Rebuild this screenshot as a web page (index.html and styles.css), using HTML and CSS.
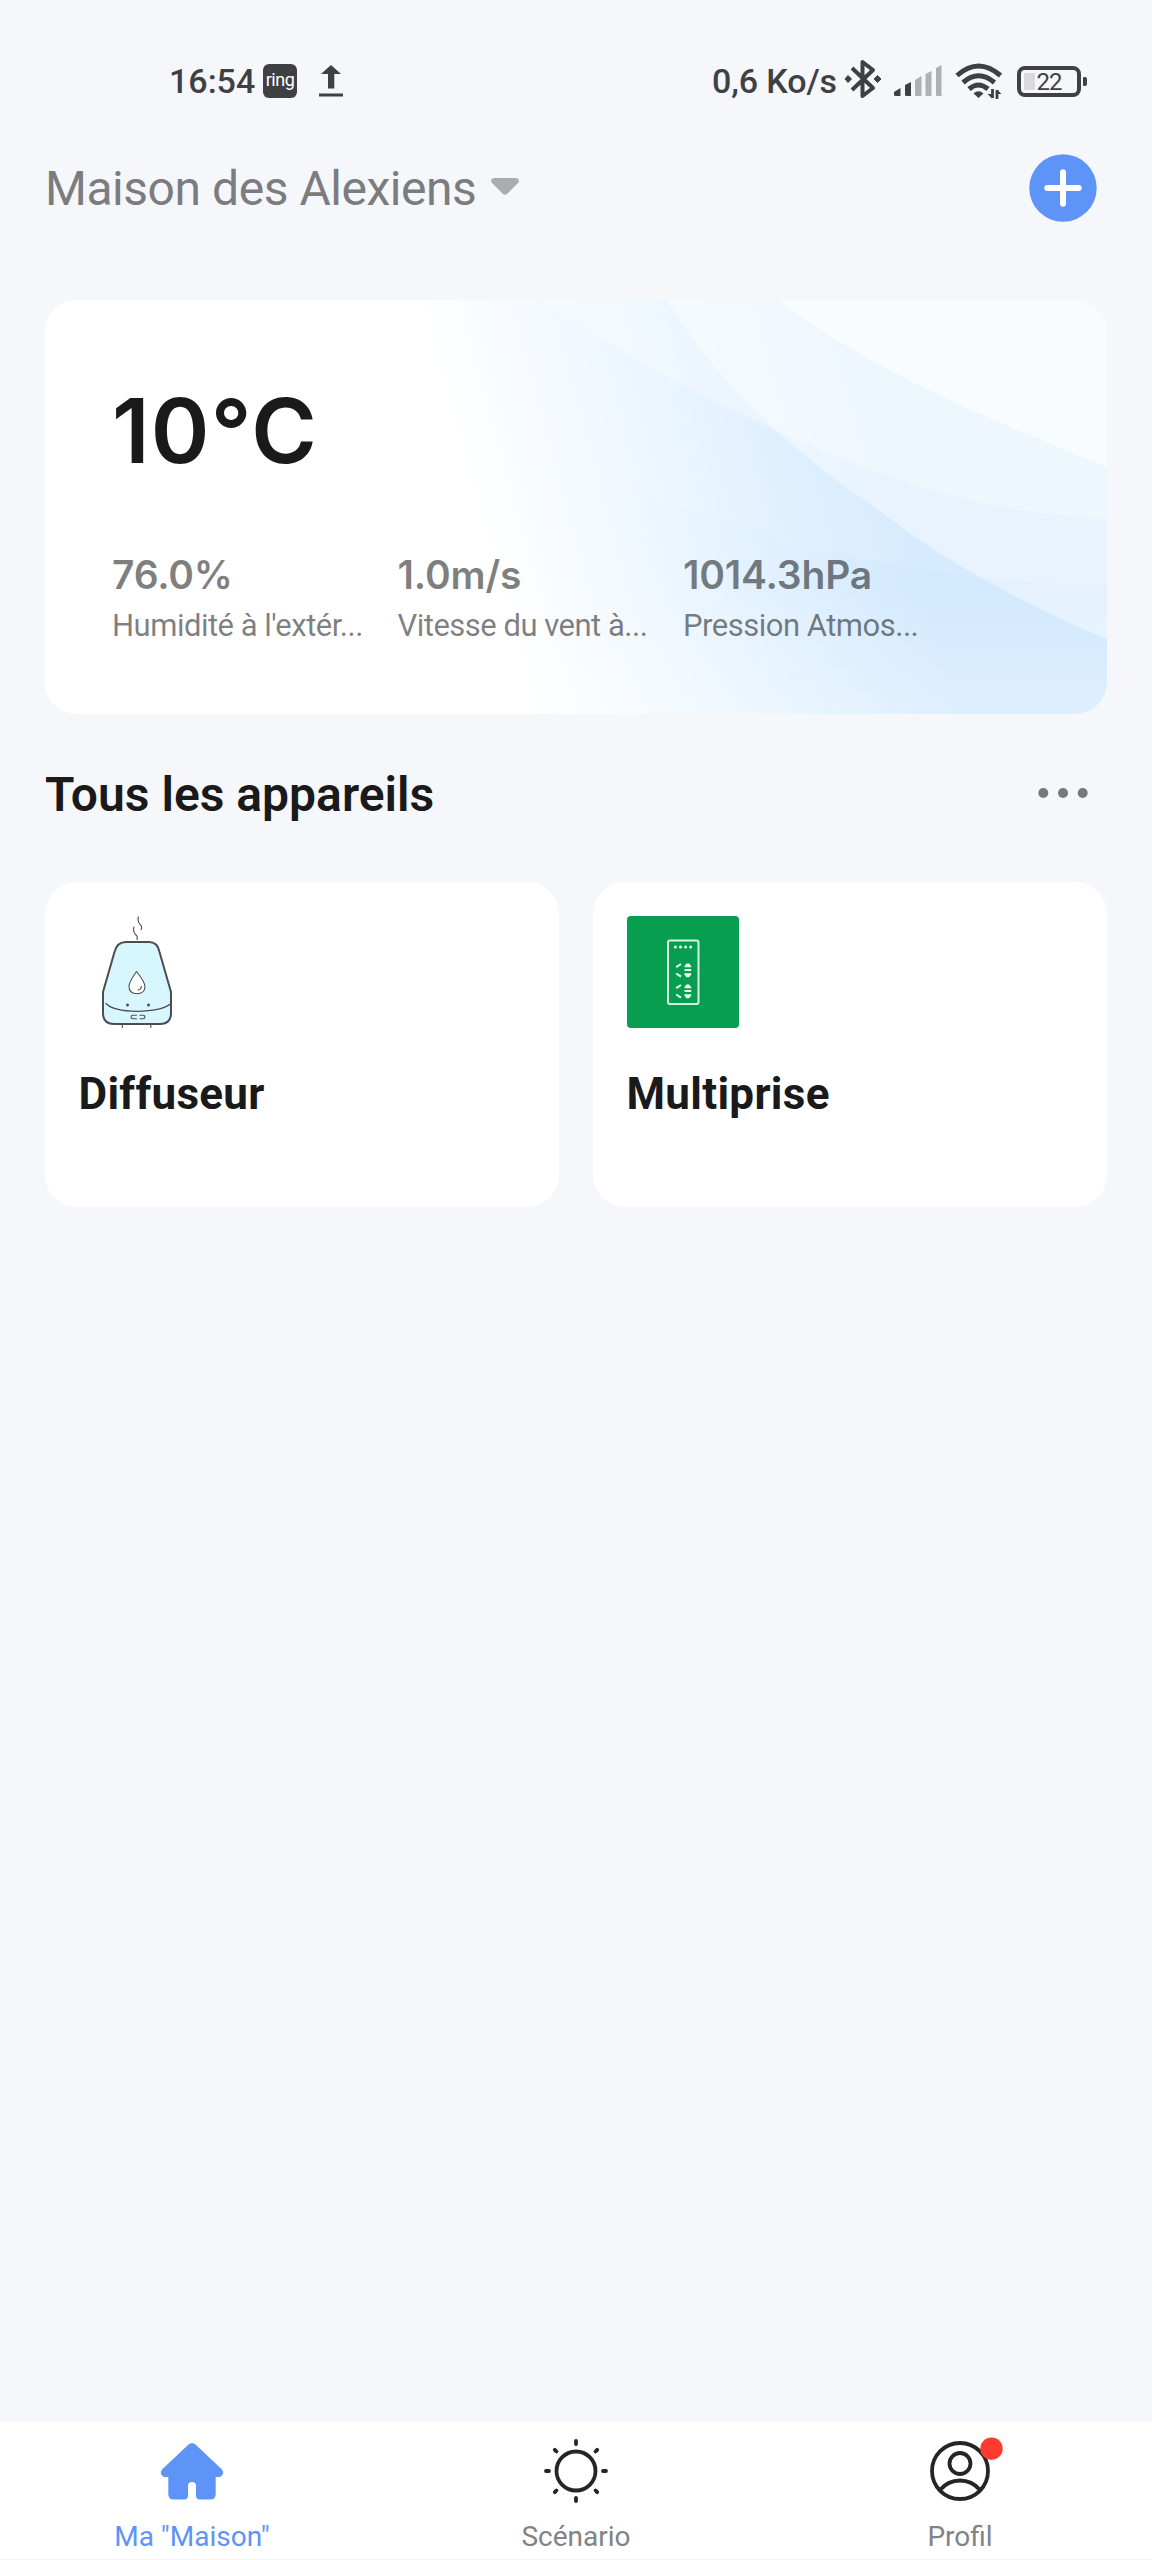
FILE: index.html
```html
<!DOCTYPE html>
<html lang="fr">
<head>
<meta charset="utf-8">
<title>Maison des Alexiens</title>
<link rel="stylesheet" href="styles.css">
</head>
<body>
<header class="status">
  <div class="status-left">
    <span class="clock">16:54</span>
    <span class="ring">ring</span>
    <svg class="upload" width="24" height="34" viewBox="0 0 24 34"><path d="M12 1 22 10H15.300V24.500H9V10H2Z" fill="#3f4044"/><path d="M0 31H24" stroke="#3f4044" stroke-width="3"/></svg>
  </div>
  <div class="status-right">
    <span class="speed">0,6 Ko/s</span>
    <svg class="bt" width="38" height="42" viewBox="0 0 38 42" fill="none" stroke="#3f4044" stroke-width="4" stroke-linejoin="round"><path d="M8 10 29 30 18.500 38V4L29 12 8 32"/><g fill="#3f4044" stroke="none"><path d="M4 17.500 7.500 21 4 24.500 1 21ZM33.500 17.500 37 21 33.500 24.500 30 21Z" stroke="#3f4044" stroke-width="1"/></g></svg>
    <svg class="signal" width="48" height="32" viewBox="0 0 48 32"><g fill="#3f4044"><path d="M0 27 6.500 23V31H1.500Q0 31 0 29.500ZM11 20 17 17V31H12.500Q11 31 11 29.500Z"/></g><g fill="#aeb0b4"><path d="M21 15 27.500 11V31H22.500Q21 31 21 29.500ZM31.500 9 37.500 6V31H33Q31.500 31 31.500 29.500ZM42 3 47.500 0V31H43.500Q42 31 42 29.500Z"/></g></svg>
    <svg class="wifi" width="48" height="36" viewBox="0 0 48 36" fill="none" stroke="#3f4044" stroke-width="5"><path d="M2 12.500Q23.500-6.500 45.500 12.500M8 19.500Q23.500 6 39.500 19.500M14 26Q23.500 18 33 26"/><path d="M18.500 30.500Q23.500 26 28.500 30.500L23.500 35Z" fill="#3f4044" stroke="none"/><path d="M37.500 35V26M42 27V36" stroke-width="2.800"/><path d="M32.500 31H37V35.500ZM46.500 31H42V26.500Z" fill="#3f4044" stroke="none"/></svg>
    <div class="battery"><span>22</span></div>
  </div>
</header>

<div class="home-bar">
  <h1 class="home-name">Maison des Alexiens</h1>
  <svg class="caret" width="28" height="18" viewBox="0 0 28 18"><path d="M3 0H25Q29.500 1 27 5L16.500 15.500Q14 18 11.500 15.500L1 5Q-1.500 1 3 0Z" fill="#abacb0"/></svg>
  <svg class="add" width="68" height="68" viewBox="0 0 68 68"><circle cx="34" cy="34" r="33.700" fill="#5e93f7"/><path d="M34 18.300V49.700M18.300 34H49.700" stroke="#fff" stroke-width="6" stroke-linecap="round"/></svg>
</div>

<section class="weather">
  <svg class="waves" viewBox="0 0 1062 414" width="1062" height="414">
    <defs>
      <linearGradient id="sky" gradientUnits="userSpaceOnUse" x1="370" y1="0" x2="767" y2="-110">
        <stop offset="0" stop-color="#fff"/><stop offset=".35" stop-color="#f0f8ff"/><stop offset=".7" stop-color="#dff0ff"/><stop offset="1" stop-color="#d3e9fe"/>
      </linearGradient>
      <linearGradient id="base" x1="0" y1="0" x2="0" y2="1"><stop offset=".7" stop-color="#fff" stop-opacity="0"/><stop offset="1" stop-color="#fff" stop-opacity=".25"/></linearGradient>
    </defs>
    <path d="M0 0H1062V414H0Z" fill="url(#sky)"/>
    <path d="M0 0H1062V414H0Z" fill="url(#base)"/>
    <g fill="#fff">
      <path d="M380 100Q590 205 798 255Q930 283 1062 285V0H380Z" opacity=".1"/>
      <path d="M499 0C600 75 760 147 840 175C918 202 990 216 1062 219V0Z" opacity=".3"/>
      <path d="M621 0C675 85 745 150 827 205C890 255 965 298 1062 339V0Z" opacity=".42"/>
      <path d="M734 0C800 52 900 103 1062 167V0Z" opacity=".62"/>
    </g>
  </svg>
  <p class="temp">10°C</p>
  <dl class="metrics">
    <div class="metric"><dd>76.0%</dd><dt>Humidité à l'extér...</dt></div>
    <div class="metric"><dd>1.0m/s</dd><dt>Vitesse du vent à...</dt></div>
    <div class="metric"><dd>1014.3hPa</dd><dt>Pression Atmos...</dt></div>
  </dl>
</section>

<div class="section-head">
  <h2>Tous les appareils</h2>
  <svg width="50" height="12" viewBox="0 0 50 12" fill="#77787c"><circle cx="5.300" cy="6" r="5"/><circle cx="25" cy="6" r="5"/><circle cx="44.700" cy="6" r="5"/></svg>
</div>

<main class="devices">
  <article class="device">
    <svg width="112" height="112" viewBox="0 0 112 112" fill="none" stroke="#4b4d50" stroke-linecap="round" stroke-linejoin="round">
      <path d="M47 26H70Q78.500 26 80.500 36L92 76V97Q92 108 81 108H35Q24 108 24 97V76L35.500 36Q38 26 47 26Z" fill="#d8f6fe" stroke-width="2"/>
      <path d="M27 87.500Q34 95 58 95.300Q82 95 91.500 88" stroke-width="1.200"/>
      <path d="M57.500 55.500Q66 66 66 71Q65.500 77.700 58 77.700Q50 77.700 50 70.500Q50 66 57.500 55.500Z" fill="#fff" stroke-width="1.100"/>
      <path d="M62.500 70.500Q62 73.500 59 74" stroke-width="1.100"/>
      <path d="M59.500 1Q58 5 61 8.500Q63.500 10 62.200 13.500M55 11Q53.500 15 56.500 18.500Q59 20 58 23.500M57.500 99.300H54Q52 99.300 52 101T54 102.700H57.500M61 99.300H64Q66 99.300 66 101T64 102.700H61M43.300 109V111.500M71.800 109V111.500" stroke-width="1.100"/>
      <g fill="#4b4d50" stroke="none"><circle cx="48.500" cy="89" r="1.500"/><circle cx="69.500" cy="89" r="1.500"/></g>
    </svg>
    <h3>Diffuseur</h3>
  </article>
  <article class="device">
    <svg width="112" height="112" viewBox="0 0 112 112">
      <rect width="112" height="112" rx="4" fill="#079e50"/>
      <rect x="41" y="24.500" width="30.500" height="63.500" rx="2" fill="none" stroke="#d5f5e0" stroke-width="2"/>
      <g fill="#e9fff1"><circle cx="48.400" cy="31" r="1.500"/><circle cx="53.500" cy="31" r="1.500"/><circle cx="58.600" cy="31" r="1.500"/><circle cx="63.700" cy="31" r="1.500"/>
      <path d="M57.500 51.300V50L59.500 47.500H62L64.200 50V51.300ZM57.500 53H64.200V55H57.500ZM57.500 57.300H64.200V58.800L62 61.200H59.500L57.500 58.800ZM57.500 72.300V71L59.500 68.500H62L64.200 71V72.300ZM57.500 74H64.200V76H57.500ZM57.500 78.300H64.200V79.800L62 82.200H59.500L57.500 79.800Z"/></g>
      <path d="M49.200 51.200 54 48M49.200 57.500 54 60.700M49.200 72.200 54 69M49.200 78.500 54 81.700" stroke="#e9fff1" stroke-width="2"/>
    </svg>
    <h3>Multiprise</h3>
  </article>
</main>

<nav class="tabs">
  <a class="tab active">
    <svg width="80" height="72" viewBox="0 0 80 72"><path d="M36.500 7.500Q40 4.500 43.500 7.500L70 32.500Q73 37.500 68 40H63.700V57Q63.700 62.500 58.500 62.500H48Q44 62.500 44 58.500V49Q44 45 40 45T36 49V58.500Q36 62.500 32 62.500H21.500Q16.300 62.500 16.300 57V40H12Q7 37.500 10 32.500Z" fill="#5e93f7"/></svg>
    <span>Ma "Maison"</span>
  </a>
  <a class="tab">
    <svg width="80" height="72" viewBox="0 0 80 72" fill="none" stroke="#242527" stroke-width="3.800" stroke-linecap="round"><circle cx="40" cy="34" r="19.500"/><path d="M40 4V7M40 61V64M10 34H13M67 34H70M18.800 12.800 20.500 14.500M59.500 53.500 61.200 55.200M61.200 12.800 59.500 14.500M20.500 53.500 18.800 55.200"/></svg>
    <span>Scénario</span>
  </a>
  <a class="tab">
    <svg width="80" height="72" viewBox="0 0 80 72" fill="none" stroke="#242527" stroke-width="3.800"><circle cx="40" cy="34" r="28"/><circle cx="40" cy="26.500" r="10.500"/><path d="M20 53Q28 43.500 40 43.500T60 53"/><circle cx="71.500" cy="11.700" r="11.200" fill="#ff3b30" stroke="none"/></svg>
    <span>Profil</span>
  </a>
</nav>
</body>
</html>
```
FILE: styles.css
```css
* { box-sizing: border-box; margin: 0; padding: 0; }
body {
  width: 1152px;
  height: 2560px;
  display: flex;
  flex-direction: column;
  background: #f5f7fb;
  color: #1a1a1b;
  font-family: Roboto, "Liberation Sans", sans-serif;
  overflow: hidden;
}
svg { display: block; flex: none; overflow: visible; }

.status {
  height: 116px;
  padding: 46px 65px 0 169px;
  display: flex;
  align-items: center;
  justify-content: space-between;
  color: #3f4044;
  font-size: 34px;
  font-weight: 500;
  line-height: 40px;
}
.status-left, .status-right { display: flex; align-items: center; }
.clock { width: 94px; }
.ring {
  width: 34px;
  height: 34px;
  margin-right: 22px;
  border-radius: 6px;
  background: #3f4044;
  color: #fff;
  font-size: 18px;
  font-weight: 400;
  line-height: 31px;
  letter-spacing: -.5px;
  text-align: center;
}
.speed { width: 132px; white-space: nowrap; letter-spacing: -.1px; }
.bt { margin-right: 12px; margin-top: -4px; }
.signal { margin-right: 13px; }
.wifi { margin-right: 14px; }
.battery {
  position: relative;
  width: 64px;
  height: 31px;
  margin-right: 6px;
  border: 4px solid #3f4044;
  border-radius: 8px;
  background: linear-gradient(#d9dadf, #d9dadf) 3px 3px / 11px 17px no-repeat;
  font-size: 24px;
  font-weight: 400;
  line-height: 24px;
  letter-spacing: -1px;
  text-align: center;
}
.battery::after {
  content: "";
  position: absolute;
  right: -10px;
  top: 7px;
  width: 4px;
  height: 9px;
  border-radius: 1px 2px 2px 1px;
  background: #3f4044;
}

.home-bar {
  height: 144px;
  padding: 1px 55px 0 45px;
  display: flex;
  align-items: center;
}
.home-name { color: #7b7c80; font-size: 48px; font-weight: 400; line-height: 60px; letter-spacing: -.46px; }
.caret { margin: 0 auto 4px 15px; }
.add { margin-bottom: 2px; }

.weather {
  position: relative;
  width: 1062px;
  height: 414px;
  margin: 40px 0 0 45px;
  padding: 78px 67px 0;
  border-radius: 32px;
  background: #fff;
  overflow: hidden;
}
.waves { position: absolute; left: 0; top: 0; }
.temp {
  position: relative;
  font-family: Inter, Roboto, sans-serif;
  font-size: 89px;
  font-weight: 600;
  line-height: 106px;
  letter-spacing: 1.2px;
}
.metrics {
  position: relative;
  display: grid;
  grid-template-columns: repeat(3, 285.5px);
  margin-top: 67px;
  color: rgba(0, 0, 0, .5);
}
.metric { display: flex; flex-direction: column; gap: 7px; white-space: nowrap; }
.metric dd { font-family: Inter, Roboto, sans-serif; font-size: 39px; font-weight: 600; line-height: 48px; letter-spacing: -.2px; }
.metric dt { font-size: 31px; line-height: 40px; letter-spacing: -.5px; }

.section-head {
  height: 168px;
  padding: 0 64px 7px 45px;
  display: flex;
  align-items: center;
  justify-content: space-between;
}
.section-head h2 { font-size: 48px; font-weight: 600; line-height: 60px; }
.section-head svg { margin-bottom: 3px; }

.devices {
  flex: 1;
  display: grid;
  grid-template-columns: 1fr 1fr;
  gap: 34px;
  align-items: start;
  padding: 0 45px;
}
.device {
  height: 325px;
  padding: 34px 33.5px 0;
  border-radius: 32px;
  background: #fff;
}
.device h3 { margin-top: 38px; font-size: 44px; font-weight: 700; line-height: 56px; letter-spacing: .3px; }

.tabs {
  height: 138px;
  display: grid;
  grid-template-columns: repeat(3, 1fr);
  background: #fff;
  border-bottom: 1px solid #f3f4f7;
}
.tab {
  display: flex;
  flex-direction: column;
  align-items: center;
  padding-top: 15px;
  color: #828387;
  font-size: 28px;
  line-height: 34px;
}
.tab.active { color: #5e93f7; }
.tab span { margin-top: 11px; }
```
